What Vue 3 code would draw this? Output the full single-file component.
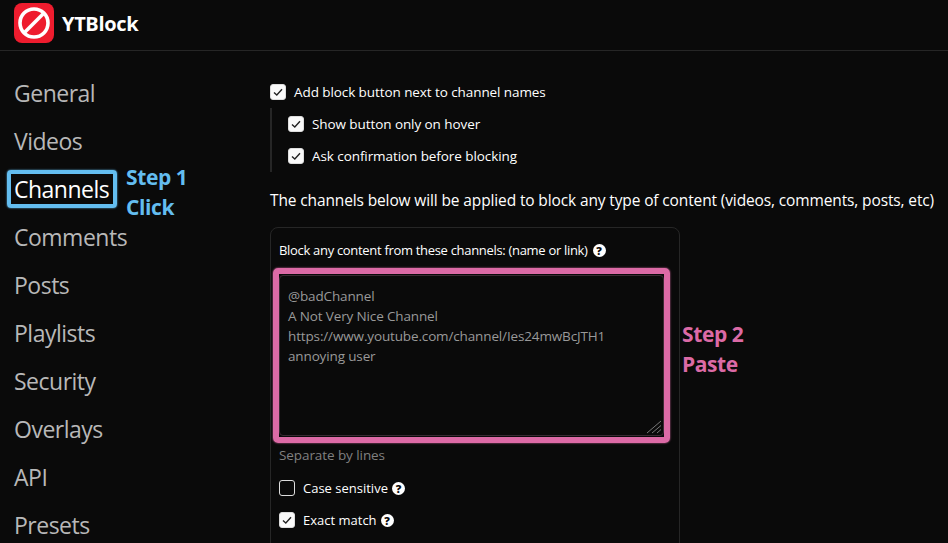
<template>
  <div class="page">
    <header class="topbar">
      <svg class="logo" viewBox="0 0 40 40" width="40" height="40">
        <rect width="40" height="40" rx="8" fill="#ee1c2e" />
        <circle cx="20" cy="20" r="14" fill="none" stroke="#fff" stroke-width="3.6" />
        <path d="M10.5 29.5 29.5 10.5" stroke="#fff" stroke-width="3.6" />
      </svg>
      <span class="brand">YTBlock</span>
    </header>

    <div class="body">
      <nav class="sidebar">
        <div v-for="item in navItems" :key="item" class="nav-item" :class="{ active: item === 'Channels' }">
          <span class="nav-label">{{ item }}</span>
          <div v-if="item === 'Channels'" class="note note-blue">Step 1<br />Click</div>
        </div>
      </nav>

      <main class="content">
        <label class="check-row">
          <span class="box on"><svg viewBox="0 0 16 16" width="16" height="16"><path d="M4 8.4 6.8 11 12 5.2" /></svg></span>
          Add block button next to channel names
        </label>
        <div class="nested">
          <label v-for="opt in nestedOptions" :key="opt" class="check-row">
            <span class="box on"><svg viewBox="0 0 16 16" width="16" height="16"><path d="M4 8.4 6.8 11 12 5.2" /></svg></span>
            {{ opt }}
          </label>
        </div>

        <p class="intro">The channels below will be applied to block any type of content (videos, comments, posts, etc)</p>

        <section class="card">
          <div class="card-label">
            Block any content from these channels: (name or link)
            <span class="help">?</span>
          </div>
          <div class="paste-wrap">
            <textarea class="channels" :placeholder="placeholder"></textarea>
            <svg class="grip" viewBox="0 0 16 14" width="16" height="14">
              <path d="M1 13 15 1M6 13 15 5.500M11 13 15 9.500" />
            </svg>
            <div class="note note-pink">Step 2<br />Paste</div>
          </div>
          <div class="hint">Separate by lines</div>
          <label class="check-row small">
            <span class="box"></span>
            Case sensitive
            <span class="help">?</span>
          </label>
          <label class="check-row small">
            <span class="box on"><svg viewBox="0 0 16 16" width="16" height="16"><path d="M4 8.4 6.8 11 12 5.2" /></svg></span>
            Exact match
            <span class="help">?</span>
          </label>
        </section>
      </main>
    </div>
  </div>
</template>

<script setup>
const navItems = ['General', 'Videos', 'Channels', 'Comments', 'Posts', 'Playlists', 'Security', 'Overlays', 'API', 'Presets']
const nestedOptions = ['Show button only on hover', 'Ask confirmation before blocking']
const placeholder = '@badChannel\nA Not Very Nice Channel\nhttps://www.youtube.com/channel/Ies24mwBcJTH1\nannoying user'
</script>

<style>
html, body {
  margin: 0;
  background: #0a0a0a;
  overflow: hidden;
}
</style>

<style scoped>
.page {
  width: 948px;
  height: 543px;
  overflow: hidden;
  background: #0a0a0a;
  color: #fff;
  font-family: "Open Sans", "Noto Sans", sans-serif;
}
.topbar {
  display: flex;
  align-items: center;
  gap: 8px;
  height: 51px;
  padding: 0 14px 4px;
  box-sizing: border-box;
  border-bottom: 1px solid #262626;
}
.logo { display: block; }
.brand {
  font-size: 20px;
  font-weight: 700;
  letter-spacing: -0.35px;
}
.body {
  display: flex;
}
.sidebar {
  width: 270px;
  flex: none;
  padding-top: 18px;
  box-sizing: border-box;
}
.nav-item {
  position: relative;
  height: 48px;
  line-height: 48px;
  padding-left: 14px;
  font-size: 23px;
  letter-spacing: -0.5px;
  color: #b8b8b8;
}
.nav-item.active { color: #fff; }
.nav-item.active .nav-label {
  position: relative;
}
.nav-item.active .nav-label::after {
  content: "";
  position: absolute;
  left: -7px;
  right: -8px;
  top: -3px;
  bottom: -3px;
  border: 4px solid #63bdf0;
  border-radius: 4px;
  box-shadow: 0 0 2px #63bdf0;
}
.note {
  position: absolute;
  font-size: 21px;
  font-weight: 700;
  line-height: 30px;
  letter-spacing: -0.4px;
  white-space: nowrap;
}
.note-blue {
  left: 126px;
  top: -3px;
  color: #63bdf0;
}
.note-pink {
  left: 403px;
  top: 44px;
  color: #dc6aa6;
}
.content {
  flex: 1;
  padding-top: 25px;
  font-size: 13.5px;
  letter-spacing: -0.08px;
}
.check-row {
  display: flex;
  align-items: center;
  height: 32px;
}
.check-row.small {
  font-size: 13px;
  letter-spacing: 0;
}
.box {
  flex: none;
  width: 16px;
  height: 16px;
  margin-right: 8px;
  border-radius: 3px;
  border: 1px solid #ddd;
  box-sizing: border-box;
  position: relative;
}
.box.on {
  background: #fafafa;
}
.box svg {
  position: absolute;
  left: -1px;
  top: -1px;
}
.box path {
  fill: none;
  stroke: #222;
  stroke-width: 1.4;
}
.nested {
  padding-left: 16px;
  border-left: 2px solid #262626;
}
.intro {
  margin: 17px 0 16px;
  font-size: 15.5px;
  line-height: 22px;
  letter-spacing: -0.13px;
  white-space: nowrap;
}
.card {
  width: 410px;
  height: 340px;
  box-sizing: border-box;
  border: 1px solid #262626;
  border-radius: 8px;
  padding: 10px 8px;
}
.card-label {
  display: flex;
  align-items: center;
  gap: 5px;
  height: 24px;
  font-size: 13px;
  letter-spacing: -0.31px;
}
.help {
  display: inline-block;
  flex: none;
  width: 13px;
  height: 13px;
  margin-left: 4px;
  border-radius: 50%;
  background: #fff;
  color: #0a0a0a;
  font-size: 11px;
  font-weight: 800;
  line-height: 13px;
  text-align: center;
  letter-spacing: 0;
}
.card-label .help { margin-left: 0; }
.paste-wrap {
  position: relative;
  margin-top: 13px;
  width: 385px;
  height: 161px;
}
.paste-wrap::before {
  content: "";
  position: absolute;
  left: -6px;
  right: -6px;
  top: -7px;
  bottom: -7px;
  border: 6px solid #dc6aa6;
  border-radius: 5px;
  box-shadow: 0 0 2px #dc6aa6;
  pointer-events: none;
}
.channels {
  display: block;
  width: 385px;
  height: 161px;
  box-sizing: border-box;
  padding: 10px 8px;
  background: #0a0a0a;
  border: 1px solid #3a2a33;
  border-radius: 4px;
  outline: none;
  resize: none;
  font-family: inherit;
  font-size: 13.5px;
  letter-spacing: -0.14px;
  line-height: 20px;
  color: #999;
  overflow: hidden;
}
.channels::placeholder {
  color: #999;
  opacity: 1;
}
.grip {
  position: absolute;
  right: 2px;
  bottom: 2px;
}
.grip path {
  fill: none;
  stroke: #777;
  stroke-width: 1;
}
.hint {
  margin-top: 9px;
  height: 20px;
  line-height: 20px;
  color: #808080;
}
.card .check-row:first-of-type { margin-top: 7px; }
</style>
